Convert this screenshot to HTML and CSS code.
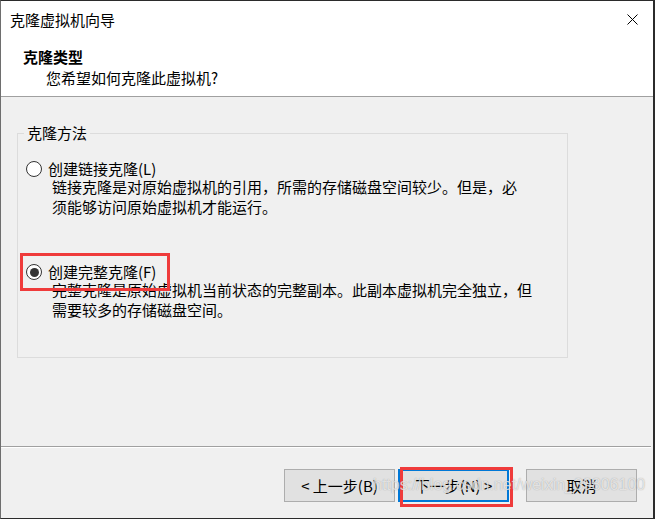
FILE: index.html
```html
<!DOCTYPE html>
<html lang="zh-CN">
<head>
<meta charset="utf-8">
<title>克隆虚拟机向导</title>
<link rel="stylesheet" href="styles.css">
</head>
<body>
<div class="window">
  <div class="titlebar">
    <span class="title">克隆虚拟机向导</span>
    <span class="close">
      <svg width="11" height="11" viewBox="0 0 11 11"><path d="M0.5 0.5 L10.5 10.5 M10.5 0.5 L0.5 10.5" stroke="#000" stroke-width="1" fill="none"/></svg>
    </span>
  </div>
  <div class="header">
    <div class="heading">克隆类型</div>
    <div class="subheading">您希望如何克隆此虚拟机?</div>
  </div>
  <div class="content">
    <fieldset class="group">
      <legend>克隆方法</legend>
      <div class="options">
        <div class="option">
          <div class="option-row"><span class="radio"></span><span class="label">创建链接克隆(L)</span></div>
          <div class="desc">链接克隆是对原始虚拟机的引用，所需的存储磁盘空间较少。但是，必<br>须能够访问原始虚拟机才能运行。</div>
        </div>
        <div class="option option-second">
          <div class="option-row highlighted"><span class="radio checked"></span><span class="label">创建完整克隆(F)</span><span class="mark mark-option"></span></div>
          <div class="desc">完整克隆是原始虚拟机当前状态的完整副本。此副本虚拟机完全独立，但<br>需要较多的存储磁盘空间。</div>
        </div>
      </div>
    </fieldset>
  </div>
  <div class="footer">
    <button class="btn btn-back">&lt; 上一步(B)</button>
    <button class="btn btn-next">下一步(N) &gt;<span class="mark mark-button"></span></button>
    <button class="btn btn-cancel">取消</button>
  </div>
  <div class="watermark">https://blog.csdn.net/weixin_39806100</div>
</div>
</body>
</html>
```

FILE: styles.css
```css
html, body {
  margin: 0;
  padding: 0;
  background: #ffffff;
}

.window {
  position: relative;
  box-sizing: border-box;
  width: 655px;
  height: 519px;
  display: flex;
  flex-direction: column;
  background: #f0f0f0;
  border-top: 1px solid #2b2b2b;
  border-right: 2px solid #2b2b2b;
  border-bottom: 1px solid #2b2b2b;
  border-left: 1px solid #6e6e6e;
  font-family: "Noto Sans CJK SC", "Noto Sans", "Liberation Sans", sans-serif;
  font-size: 15px;
  color: #000;
  overflow: hidden;
}

.titlebar {
  height: 38px;
  background: #ffffff;
  display: flex;
  align-items: center;
  justify-content: space-between;
  padding-left: 9px;
  padding-bottom: 1px;
  box-sizing: border-box;
}

.title {
  line-height: 20px;
}

.close {
  display: flex;
  margin-right: 15px;
}

.header {
  height: 58px;
  box-sizing: border-box;
  background: #ffffff;
  padding: 8px 0 0 22px;
  border-bottom: 1px solid #a0a0a0;
}

.heading {
  font-weight: 700;
  line-height: 20px;
}

.subheading {
  line-height: 20px;
  margin-top: 1px;
  padding-left: 23px;
}

.content {
  flex: 1;
  padding: 26px 0 0 16px;
}

.group {
  margin: 0;
  padding: 0;
  width: 551px;
  box-sizing: border-box;
  border: 1px solid #dcdcdc;
  min-width: 0;
}

.group legend {
  margin-left: 6px;
  padding: 0 3px;
  line-height: 20px;
}

.options {
  padding: 18px 0 37px 8px;
}

.option-second {
  margin-top: 47px;
}

.option-row {
  position: relative;
  display: flex;
  align-items: center;
  height: 16px;
  line-height: 16px;
  gap: 6px;
}

.radio {
  box-sizing: border-box;
  width: 16px;
  height: 16px;
  border: 1px solid #333333;
  border-radius: 50%;
  background: #ffffff;
  display: flex;
  align-items: center;
  justify-content: center;
  flex: none;
}

.radio.checked::after {
  content: "";
  width: 9px;
  height: 9px;
  border-radius: 50%;
  background: #333333;
}

.desc {
  margin-left: 26px;
  line-height: 20px;
  white-space: nowrap;
}

.mark {
  position: absolute;
  box-sizing: border-box;
  border: 3px solid #ef3b3b;
  pointer-events: none;
}

.mark-option {
  left: -6px;
  top: -11px;
  width: 150px;
  height: 38px;
}

.footer {
  height: 72px;
  box-sizing: border-box;
  border-top: 1px solid #a0a0a0;
  box-shadow: inset 0 1px #ffffff;
  margin-right: 2px;
  display: flex;
  justify-content: flex-end;
  align-items: flex-start;
  padding: 22px 14px 0 0;
}

.btn {
  position: relative;
  box-sizing: border-box;
  width: 111px;
  height: 33px;
  padding: 0;
  background: #e1e1e1;
  border: 1px solid #adadad;
  font-family: inherit;
  font-size: 15px;
  color: #000;
  line-height: 20px;
}

.btn-back {
  margin-right: 3px;
}

.btn-next {
  border: 2px solid #0078d7;
  margin-right: 17px;
}

.mark-button {
  left: 0px;
  top: -4px;
  width: 113px;
  height: 40px;
}

.watermark {
  position: absolute;
  left: 372px;
  top: 474px;
  font-family: "Liberation Sans", Arial, sans-serif;
  font-size: 16px;
  line-height: 20px;
  color: rgba(255, 255, 255, 0.7);
  text-shadow: 0 0 1px rgba(90, 90, 90, 0.55);
  white-space: nowrap;
  pointer-events: none;
}
```
